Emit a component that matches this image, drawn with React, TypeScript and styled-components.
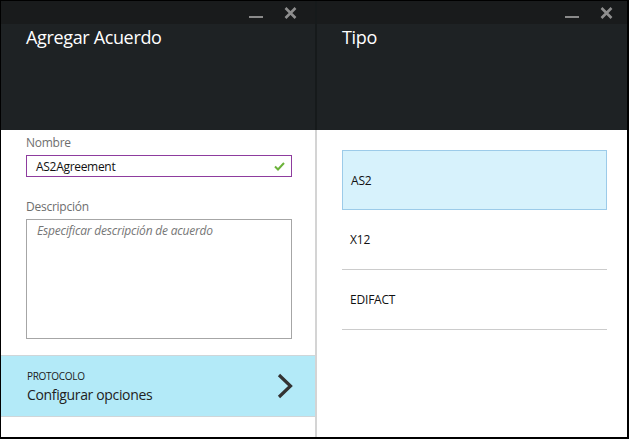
import React from "react";
import styled, { createGlobalStyle } from "styled-components";

const Global = createGlobalStyle`
  html, body { margin: 0; padding: 0; background: #ffffff; }
  body { font-family: "Open Sans", "Noto Sans", Arial, sans-serif; }
  * { box-sizing: border-box; }
`;

const Frame = styled.div`
  width: 629px;
  height: 439px;
  border-top: 1px solid #000;
  border-left: 1px solid #000;
  border-right: 2px solid #000;
  border-bottom: 2px solid #000;
  display: flex;
  overflow: hidden;
  background: #fff;
`;

const Blade = styled.section`
  width: 314px;
  flex: 0 0 314px;
  display: flex;
  flex-direction: column;
  height: 100%;
`;

const Gutter = styled.div`
  flex: 0 0 2px;
  display: flex;
  flex-direction: column;
`;

const GutterTop = styled.div`
  height: 129px;
  background: #161a1b;
`;

const GutterBottom = styled.div`
  flex: 1;
  background: #d4d4d4;
`;

const Header = styled.header`
  height: 129px;
  background: #1e2224;
  display: flex;
  flex-direction: column;
`;

const TitleBar = styled.div`
  height: 23px;
  background: #191b1c;
  display: flex;
  justify-content: flex-end;
  align-items: flex-start;
  padding-right: 8px;
`;

const IconButton = styled.button`
  width: 34px;
  height: 23px;
  border: 0;
  padding: 0;
  background: transparent;
  display: flex;
  align-items: center;
  justify-content: center;
  cursor: pointer;
`;

const Title = styled.h1`
  margin: 1px 0 0;
  padding-left: 25px;
  font-size: 18px;
  line-height: 24px;
  font-weight: 400;
  letter-spacing: -0.35px;
  color: #ffffff;
`;

const Body = styled.div`
  flex: 1;
  display: flex;
  flex-direction: column;
  background: #fff;
`;

const Form = styled.div`
  padding: 5px 23px 0 25px;
  display: flex;
  flex-direction: column;
`;

const Label = styled.label<{ $gap?: number }>`
  font-size: 12px;
  line-height: 16px;
  color: #6e6e6e;
  letter-spacing: -0.25px;
  margin-top: ${(p) => p.$gap ?? 0}px;
  margin-bottom: 4px;
`;

const InputBox = styled.div`
  height: 22px;
  width: 266px;
  border: 1px solid #8e3c9e;
  display: flex;
  align-items: center;
  padding: 0 6px 0 9px;
`;

const InputText = styled.span`
  flex: 1;
  font-size: 12px;
  letter-spacing: -0.3px;
  color: #111;
`;

const TextArea = styled.div`
  width: 266px;
  height: 120px;
  border: 1px solid #a6a6a6;
  padding: 3px 10px;
  font-size: 12px;
  line-height: 16px;
  font-style: italic;
  letter-spacing: -0.2px;
  color: #767676;
`;

const NavItem = styled.div`
  margin-top: 16px;
  height: 62px;
  background: #b3eaf8;
  border-top: 1px solid #cfd6d9;
  border-bottom: 1px solid #cfd6d9;
  display: flex;
  align-items: center;
  padding: 2px 22px 0 26px;
`;

const NavText = styled.div`
  flex: 1;
  display: flex;
  flex-direction: column;
`;

const NavCaption = styled.span`
  font-size: 10px;
  line-height: 13px;
  color: #1a1a1a;
  letter-spacing: -0.3px;
`;

const NavValue = styled.span`
  font-size: 14px;
  line-height: 20px;
  color: #222;
  letter-spacing: -0.35px;
  margin-top: 2px;
`;

const ChevronSlot = styled.span`
  display: flex;
  margin-top: -2px;
`;

const List = styled.div`
  padding: 20px 24px 0 25px;
  display: flex;
  flex-direction: column;
`;

const Option = styled.div<{ $selected?: boolean }>`
  height: 60px;
  display: flex;
  align-items: center;
  padding-left: 8px;
  font-size: 12px;
  letter-spacing: -0.2px;
  color: #111;
  background: ${(p) => (p.$selected ? "#d7f2fc" : "transparent")};
  border: ${(p) => (p.$selected ? "1px solid #9ccbe9" : "none")};
  border-bottom: 1px solid ${(p) => (p.$selected ? "#9ccbe9" : "#cccccc")};
`;

const Minimize = () => (
  <svg width="14" height="12" viewBox="0 0 14 12">
    <rect x="0" y="9" width="14" height="2" fill="#8a8a8a" />
  </svg>
);

const Close = () => (
  <svg width="13" height="12" viewBox="0 0 13 12">
    <path d="M1.5 1 L11.5 11 M11.5 1 L1.5 11" stroke="#8e8e8e" strokeWidth="2.6" />
  </svg>
);

const Check = () => (
  <svg width="11" height="9" viewBox="0 0 11 9">
    <path d="M1 4.5 L4 7.5 L10 1" stroke="#6cb33a" strokeWidth="2" fill="none" />
  </svg>
);

const Chevron = () => (
  <svg width="16" height="26" viewBox="0 0 16 26">
    <path d="M2 2 L13.5 13 L2 24" stroke="#333" strokeWidth="3.2" fill="none" />
  </svg>
);

const BladeHeader = ({ title }: { title: string }) => (
  <Header>
    <TitleBar>
      <IconButton aria-label="Minimizar"><Minimize /></IconButton>
      <IconButton aria-label="Cerrar"><Close /></IconButton>
    </TitleBar>
    <Title>{title}</Title>
  </Header>
);

export default function App() {
  return (
    <>
      <Global />
      <Frame>
        <Blade>
          <BladeHeader title="Agregar Acuerdo" />
          <Body>
            <Form>
              <Label>Nombre</Label>
              <InputBox>
                <InputText>AS2Agreement</InputText>
                <Check />
              </InputBox>
              <Label $gap={22}>Descripción</Label>
              <TextArea>Especificar descripción de acuerdo</TextArea>
            </Form>
            <NavItem>
              <NavText>
                <NavCaption>PROTOCOLO</NavCaption>
                <NavValue>Configurar opciones</NavValue>
              </NavText>
              <ChevronSlot>
                <Chevron />
              </ChevronSlot>
            </NavItem>
          </Body>
        </Blade>
        <Gutter>
          <GutterTop />
          <GutterBottom />
        </Gutter>
        <Blade>
          <BladeHeader title="Tipo" />
          <Body>
            <List>
              <Option $selected>AS2</Option>
              <Option>X12</Option>
              <Option>EDIFACT</Option>
            </List>
          </Body>
        </Blade>
      </Frame>
    </>
  );
}
